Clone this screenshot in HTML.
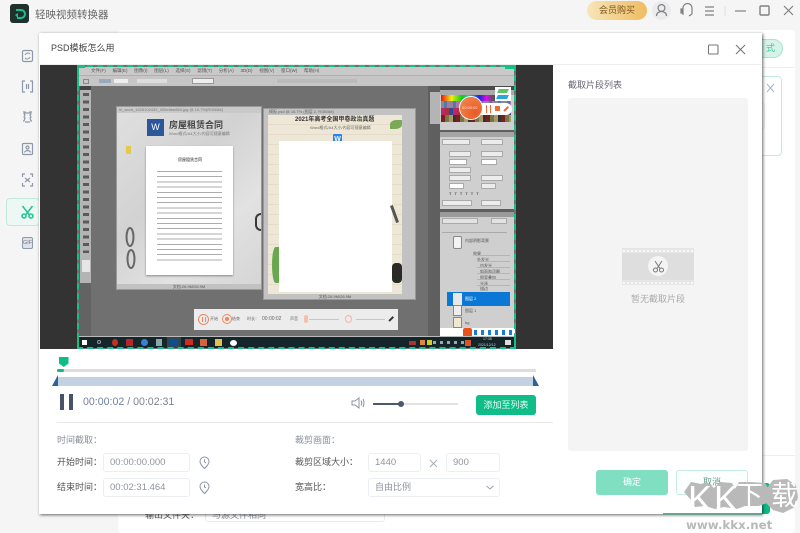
<!DOCTYPE html>
<html lang="zh"><head><meta charset="utf-8"><title>轻映视频转换器</title>
<style>
*{box-sizing:border-box}
html,body{margin:0;padding:0;width:800px;height:533px;overflow:hidden;background:#f5f5f5;font-family:"Liberation Sans","Noto Sans CJK SC",sans-serif;color:#333}
.a{position:absolute}
.t{position:absolute;white-space:nowrap;line-height:1}
.inp{position:absolute;background:#fff;border:1px solid #ebeef3;border-radius:3px;font-size:9.5px;color:#8f949c;line-height:17px;padding-left:6px;height:19px}
.lb{position:absolute;font-size:9px;color:#555;white-space:nowrap;line-height:1}
.x{position:absolute;font-size:4px;color:#555;white-space:nowrap;line-height:1}
.f{position:absolute;background:#ececec;border:1px solid #aaa;height:6px}
.wm{position:absolute;color:#fff;line-height:1;white-space:nowrap}
</style></head><body>
<!-- Title bar -->
<div class="a" style="left:10px;top:4px;width:19px;height:19px;background:#20302c;border-radius:3px"></div>
<svg class="a" style="left:10px;top:4px" width="19" height="19"><path d="M6 6h5a4 4 0 0 1 0 8H7" fill="none" stroke="#17c08c" stroke-width="2"/><path d="M5 11l3-2v5z" fill="#17c08c"/></svg>
<div class="t" style="left:35px;top:9.500px;font-size:10.500px;color:#666">轻映视频转换器</div>
<div class="a" style="left:587px;top:1px;width:60px;height:19px;border-radius:10px;background:linear-gradient(90deg,#f8e5b8,#efbc62);font-size:9px;color:#7a5520;text-align:center;line-height:19px">会员购买</div>
<div class="a" style="left:652px;top:1px;width:19px;height:19px;border-radius:50%;background:#ebebed"></div>
<svg class="a" style="left:652px;top:1px" width="148" height="20" fill="none" stroke="#808080" stroke-width="1.200">
<circle cx="9.500" cy="7" r="3.400"/><path d="M4.500 15c0-6 10-6 10 0"/>
<path d="M31 14V7a4.500 4.500 0 0 1 9 0v6M29 8h1v4h-1zM40 13l-3 2"/>
<path d="M53 6h9M53 10h9M53 14h9"/>
<path d="M73 5v10" stroke="#e3e3e3"/>
<path d="M83 10h11"/><rect x="108" y="5" width="9" height="9" rx="1" stroke-width="1.400"/>
<path d="M132 5l9 9M141 5l-9 9"/></svg>
<!-- Sidebar -->
<svg class="a" style="left:20px;top:48px" width="16" height="205" fill="none" stroke="#8f98a8" stroke-width="1.200">
<rect x="2.500" y="2.500" width="10" height="11" rx="1.500"/><path d="M5 7a3 3 0 0 1 5-1M10 9a3 3 0 0 1-5 1" stroke-width="1"/>
<path d="M5 33h-2.500v11H5M10 33h2.500v11H10M6.500 36v5M8.500 36v5"/>
<path d="M3 64h2l-1 2 1 1-1 2 1 1-1 3h-1M12 64h-2l1 2-1 1 1 2-1 1 1 3h1M5 65h5M5 74h5"/>
<rect x="2.500" y="95.500" width="10" height="11" rx="1"/><circle cx="7.500" cy="99.500" r="1.500"/><path d="M4.500 104.500c0-2.500 6-2.500 6 0"/>
<path d="M5 126h-2.500v3M10 126h2.500v3M5 138h-2.500v-3M10 138h2.500v-3M5 130l2.500 2 2.500-2M5 134l2.500-2 2.500 2"/>
</svg>
<div class="a" style="left:6px;top:198px;width:34px;height:28px;border:1px solid #bfe9da;border-radius:4px;background:#edf8f4"></div>
<svg class="a" style="left:21px;top:205px" width="13" height="14" fill="none" stroke="#27c796" stroke-width="1.600"><circle cx="3" cy="11" r="2"/><circle cx="10" cy="11" r="2"/><path d="M1.500 1l6.500 8.500M11.500 1L5 9.500"/></svg>
<div class="a" style="left:22px;top:237px;width:11px;height:12px;background:#dfe2e8;border:1px solid #8f98a8;border-radius:2px;font-size:5.500px;line-height:10px;text-align:center;color:#778">GIF</div>
<!-- Main backdrop -->
<div class="a" style="left:118px;top:30px;width:677px;height:503px;background:#fff;border-radius:4px"></div>
<div class="a" style="left:740px;top:67px;width:55px;height:1px;background:#eee"></div>
<div class="a" style="left:740px;top:39px;width:43px;height:19px;border-radius:10px;background:#d6f3e9;border:1px solid #a8e5d0;color:#3cc79a;font-size:9px;line-height:17px;text-align:right;padding-right:7px">式</div>
<div class="a" style="left:740px;top:76px;width:42px;height:80px;border:1.500px solid #c3ebdd;border-radius:4px"></div>
<div class="a" style="left:740px;top:103px;width:25px;height:26px;border:1px solid #eee;border-radius:3px"></div>
<svg class="a" style="left:766px;top:83px" width="9" height="10" fill="none" stroke="#a9b5c4"><path d="M1 1l7 8M8 1l-7 8"/></svg>
<div class="a" style="left:740px;top:455px;width:55px;height:1px;background:#eee"></div>
<div class="a" style="left:740px;top:483px;width:30px;height:31px;background:#0cb985;border-radius:3px"></div>
<div class="t" style="left:145px;top:510.500px;font-size:9px;color:#555">输出文件夹：</div>
<div class="a" style="left:205px;top:500px;width:180px;height:22px;background:#fff;border:1px solid #e8ecf2;border-radius:3px;font-size:9px;color:#8a8f98;line-height:28px;padding-left:6px">与源文件相同</div>
<!-- Modal -->
<div class="a" style="left:39px;top:33px;width:723px;height:481px;background:#fff;box-shadow:1px 1px 3px rgba(0,0,0,.6)"></div>
<div class="a" style="left:663px;top:513px;width:99px;height:1.500px;background:#6aa392"></div>
<div class="t" style="left:51px;top:44px;font-size:9px;color:#444">PSD模板怎么用</div>
<div class="a" style="left:40px;top:64px;width:721px;height:1px;background:#eee"></div>
<svg class="a" style="left:700px;top:41px" width="50" height="18" fill="none" stroke="#777" stroke-width="1.100"><rect x="8.500" y="4" width="9.500" height="9" rx="1"/><path d="M36 4l9 9M45 4l-9 9"/></svg>
<!-- Video -->
<div class="a" style="left:40px;top:65px;width:513px;height:284px;background:#333"></div>
<div class="a" style="left:77px;top:65px;width:439px;height:284px;background:#707070;overflow:hidden">
 <div class="a" style="left:2px;top:2px;width:435px;height:8px;background:#c9c9c9;font-size:4.500px;color:#555;line-height:8px;padding-left:12px;word-spacing:5.500px;white-space:nowrap">文件(F) 编辑(E) 图像(I) 图层(L) 选择(S) 滤镜(T) 分析(A) 3D(D) 视图(V) 窗口(W) 帮助(H)</div>
 <div class="a" style="left:2px;top:10px;width:435px;height:11px;background:#c6c6c6;border-top:1px solid #b0b0b0"></div>
 <div class="a" style="left:6px;top:14px;width:6px;height:5px;border:1px solid #888"></div>
 <div class="a" style="left:22px;top:14px;width:12px;height:4px;background:#9ab"></div>
 <div class="a" style="left:37px;top:14px;width:14px;height:4px;background:#eee"></div>
 <div class="a" style="left:60px;top:14px;width:30px;height:4px;background:#ddd"></div>
 <div class="a" style="left:115px;top:13px;width:22px;height:6px;background:#eee;border:1px solid #999"></div>
 <div class="a" style="left:200px;top:14px;width:80px;height:4px;background:#bbb"></div>
 <div class="a" style="left:2px;top:21px;width:12px;height:250px;background:#636363"></div>
 <div class="a" style="left:3px;top:21px;width:11px;height:4px;background:#444"></div>
 <div class="a" style="left:3px;top:25px;width:11px;height:193px;background:#b4b4b4"></div>
 <div class="a" style="left:6px;top:28px;width:6px;height:160px;background:repeating-linear-gradient(180deg,#5a5a5a 0 3px,transparent 3px 7.500px)"></div>
 <div class="a" style="left:5px;top:195px;width:8px;height:12px;background:#e6e6e6"></div>
 <!-- window 1 -->
 <div class="a" style="left:39px;top:41px;width:146px;height:184px;background:#c9c9c9;border:1px solid #999"></div>
 <div class="a" style="left:40px;top:48px;width:144px;height:171px;background:linear-gradient(135deg,#dfdfdf,#d2d2d2 40%,#e2e2e2 70%,#d5d5d5)"></div>
 <div class="a" style="left:42px;top:42px;font-size:4px;color:#777;white-space:nowrap">hl_word_1625102432_005e6be864.jpg @ 16.7%(RGB/8#)</div>
 <div class="a" style="left:70px;top:54px;width:17px;height:17px;background:#2b579a;color:#fff;font-size:9px;line-height:17px;text-align:center">W</div>
 <div class="t" style="left:92px;top:56px;font-size:9px;font-weight:bold;color:#444">房屋租赁合同</div>
 <div class="t" style="left:92px;top:67px;font-size:4px;color:#777">Word格式/A4大小/内容可随意编辑</div>
 <div class="a" style="left:69px;top:81px;width:87px;height:129px;background:#fff;box-shadow:0 1px 2px #888"></div>
 <div class="t" style="left:101px;top:93px;font-size:4px;font-weight:bold;color:#666">房屋租赁合同</div>
 <div class="a" style="left:80px;top:106px;width:65px;height:92px;background:repeating-linear-gradient(180deg,#888 0 1px,#fff 1px 5.200px);opacity:.7"></div>
 <div class="a" style="left:49px;top:81px;width:5px;height:8px;background:#e2c94f"></div>
 <svg class="a" style="left:46px;top:160px" width="16" height="48" fill="none" stroke="#666" stroke-width="2"><ellipse cx="7" cy="12" rx="3.500" ry="9"/><ellipse cx="8" cy="34" rx="3.500" ry="9"/></svg>
 <div class="a" style="left:178px;top:148px;width:6px;height:18px;border:2.500px solid #3a3a32;border-right:none;border-radius:6px 0 0 6px"></div>
 <div class="a" style="left:40px;top:219px;width:144px;height:5px;background:#c2c2c2;font-size:4px;text-align:center;color:#555;line-height:5px">文档:26.9M/26.9M</div>
 <!-- window 2 -->
 <div class="a" style="left:186px;top:43px;width:153px;height:192px;background:#c2c2c2;border:1px solid #999"></div>
 <div class="a" style="left:187px;top:44px;font-size:4px;color:#666;white-space:nowrap;padding-left:5px">模板.psd @ 16.7% (图层 2, RGB/8#)</div>
 <div class="a" style="left:191px;top:50px;width:134px;height:179px;background:#ebe4d3;background-image:repeating-linear-gradient(180deg,#eee7d7 0 9px,#e5dcc8 9px 10px)"></div>
 <div class="t" style="left:218px;top:52px;font-size:6px;font-weight:bold;color:#333">2021年高考全国甲卷政治真题</div>
 <div class="t" style="left:233px;top:61px;font-size:4px;color:#666">Word格式/A4大小/内容可随意编辑</div>
 <div class="a" style="left:256px;top:69px;width:9px;height:11px;background:#2b83ea;border-radius:1px;color:#fff;font-size:7px;line-height:11px;text-align:center;font-weight:bold">W</div>
 <div class="a" style="left:202px;top:76px;width:113px;height:151px;background:#fff"></div>
 <div class="a" style="left:195px;top:182px;width:7px;height:36px;background:#6aa84f;border-radius:60% 0 0 60%"></div>
 <div class="a" style="left:315px;top:198px;width:10px;height:20px;background:#2a2a26;border-radius:4px"></div>
 <div class="a" style="left:313px;top:55px;width:12px;height:9px;background:#7ba957;border-radius:50% 0 50% 0"></div>
 <div class="a" style="left:316px;top:140px;width:3px;height:18px;background:#555;transform:rotate(-20deg)"></div>
 <div class="a" style="left:191px;top:229px;width:134px;height:5px;background:#c2c2c2;font-size:4px;text-align:center;color:#555;line-height:5px">文档:26.9M/26.9M</div>
 <!-- Right panels -->
 <div class="a" style="left:351px;top:21px;width:12px;height:251px;background:#5f5f5f"></div>
 <div class="a" style="left:353px;top:27px;width:10px;height:32px;background:#b4b4b4"></div>
 <div class="a" style="left:363px;top:21px;width:74px;height:251px;background:#cfcfcf"></div>
 <div class="a" style="left:363px;top:21px;width:74px;height:4px;background:#4a4a4a"></div>
 <div class="a" style="left:363px;top:25px;width:74px;height:5px;background:#aaa"></div>
 <div class="a" style="left:364px;top:30px;width:70px;height:6px;background:linear-gradient(90deg,#e11,#ee1 15%,#1c1 30%,#1cc 40%,#22d 55%,#d1d 65%,#555 75%,#222)"></div>
 <div class="a" style="left:364px;top:36px;width:70px;height:7px;background:repeating-linear-gradient(90deg,#889 0 3px,#57a 3px 6px,#a7a 6px 9px)"></div>
 <div class="a" style="left:364px;top:43px;width:70px;height:7px;background:repeating-linear-gradient(90deg,#c2266a 0 4px,#a33 4px 8px,#2b4a9a 8px 12px)"></div>
 <div class="a" style="left:364px;top:50px;width:70px;height:7px;background:repeating-linear-gradient(90deg,#7a1f1f 0 4px,#774 4px 8px,#a96 8px 12px,#333 12px 15px)"></div>
 <div class="a" style="left:363px;top:65px;width:74px;height:2px;background:#5f5f5f"></div>
 <div class="a" style="left:363px;top:67px;width:74px;height:5px;background:#a5a5a5"></div>
 <div class="f" style="left:365px;top:74px;width:28px"></div><div class="f" style="left:404px;top:74px;width:22px"></div>
 <div class="f" style="left:372px;top:86px;width:22px"></div><div class="f" style="left:404px;top:86px;width:22px"></div>
 <div class="f" style="left:372px;top:94px;width:18px;background:#fff"></div><div class="f" style="left:404px;top:94px;width:16px;background:#fff"></div>
 <div class="f" style="left:372px;top:102px;width:22px"></div>
 <div class="f" style="left:372px;top:110px;width:22px"></div><div class="f" style="left:404px;top:110px;width:22px"></div>
 <div class="f" style="left:372px;top:118px;width:15px;background:#fff"></div><div class="f" style="left:404px;top:118px;width:15px"></div>
 <div class="x" style="left:372px;top:127px;letter-spacing:3px;font-weight:bold">TTTTTT</div>
 <div class="f" style="left:365px;top:135px;width:30px"></div><div class="f" style="left:404px;top:135px;width:20px"></div>
 <div class="a" style="left:363px;top:144px;width:74px;height:3px;background:#5f5f5f"></div>
 <div class="a" style="left:363px;top:147px;width:74px;height:5px;background:#9a9a9a"></div>
 <div class="f" style="left:365px;top:153px;width:36px;background:#e2e2e2"></div>
 <div class="f" style="left:414px;top:153px;width:16px;background:#e2e2e2"></div>
 <div class="a" style="left:365px;top:161px;width:65px;height:7px;border-bottom:1px solid #aaa"></div>
 <div class="a" style="left:376px;top:171px;width:9px;height:13px;background:#f2f2f2;border:1px solid #888;border-radius:2px"></div>
 <div class="x" style="left:388px;top:174px">内部阴影背景</div>
 <div class="x" style="left:396px;top:187px">效果</div>
 <div class="x" style="left:400px;top:193px">外发光</div>
 <div class="x" style="left:403px;top:199px">内发光</div>
 <div class="x" style="left:403px;top:205px">斜面和浮雕</div>
 <div class="x" style="left:403px;top:211px">图案叠加</div>
 <div class="x" style="left:403px;top:217px">光泽</div>
 <div class="x" style="left:403px;top:222px">描边</div>
 <div class="a" style="left:400px;top:190px;width:33px;height:36px;background:repeating-linear-gradient(180deg,#b5b5b5 0 1px,transparent 1px 6px)"></div>
 <div class="a" style="left:370px;top:227px;width:63px;height:14px;background:#0a78d4"></div>
 <div class="a" style="left:376px;top:228px;width:9px;height:12px;background:#e8e8e8"></div>
 <div class="x" style="left:388px;top:232px;color:#fff">图层 2</div>
 <div class="a" style="left:376px;top:240px;width:9px;height:11px;background:#eee;border:1px solid #888"></div>
 <div class="x" style="left:388px;top:244px">图层 1</div>
 <div class="a" style="left:376px;top:252px;width:9px;height:11px;background:#efe8d3;border:1px solid #888"></div>
 <div class="x" style="left:388px;top:256px">bg</div>
 <div class="a" style="left:363px;top:263px;width:75px;height:9px;background:#fff"></div>
 <div class="a" style="left:386px;top:263px;width:9px;height:9px;background:#e8501c;border-radius:2px"></div>
 <div class="a" style="left:397px;top:265px;width:40px;height:5px;background:repeating-linear-gradient(90deg,#1b7bcf 0 3px,#fff 3px 7px)"></div>
 <!-- Floating recorder -->
 <div class="a" style="left:394px;top:38px;width:41px;height:12px;background:#fff;border-radius:6px"></div>
 <div class="a" style="left:383px;top:32px;width:22px;height:22px;border-radius:50%;background:radial-gradient(circle at 70% 70%,#e85b25,#f58a4e);box-shadow:0 0 0 1px #fff"></div>
 <div class="a" style="left:385px;top:41px;font-size:4px;color:#fde;line-height:1;white-space:nowrap">00:00:02</div>
 <div class="a" style="left:409px;top:40px;width:5px;height:8px;border-left:1.500px solid #ef6a32;border-right:1.500px solid #ef6a32"></div>
 <div class="a" style="left:418px;top:41px;width:5px;height:5px;background:#ef6a32"></div>
 <div class="a" style="left:426px;top:43px;width:6px;height:1.500px;background:#ef6a32;transform:rotate(-45deg)"></div>
 <div class="a" style="left:418px;top:22px;width:16px;height:14px;background:#fff"></div>
 <div class="a" style="left:421px;top:24px;width:10px;height:4px;background:#5bc46a;transform:skewX(-25deg)"></div>
 <div class="a" style="left:420px;top:30px;width:11px;height:4px;background:#27a6e0;transform:skewX(-25deg)"></div>
 <!-- bottom recorder bar -->
 <div class="a" style="left:117px;top:244px;width:204px;height:21px;background:#ececec"></div>
 <div class="a" style="left:121px;top:249px;width:11px;height:11px;border-radius:50%;border:1.500px solid #ef8a60"></div>
 <div class="a" style="left:124.500px;top:252px;width:4px;height:5px;border-left:1.200px solid #ef8a60;border-right:1.200px solid #ef8a60"></div>
 <div class="a" style="left:145px;top:249px;width:10px;height:10px;border-radius:50%;border:1px solid #ef8a60;background:radial-gradient(#ef8a60 0 35%,transparent 40%)"></div>
 <div class="t" style="left:133px;top:252px;font-size:4px;color:#666">开始</div>
 <div class="t" style="left:155px;top:252px;font-size:4px;color:#666">结束</div>
 <div class="t" style="left:170px;top:252px;font-size:4px;color:#666">时长：</div>
 <div class="t" style="left:185px;top:252px;font-size:5px;color:#666">00:00:02</div>
 <div class="t" style="left:213px;top:252px;font-size:4px;color:#666">声音</div>
 <div class="a" style="left:227px;top:250px;width:4px;height:8px;background:#f5c0a8;border-radius:2px"></div>
 <div class="a" style="left:232px;top:254px;width:30px;height:1px;background:#f5b59e"></div>
 <div class="a" style="left:268px;top:250px;width:7px;height:8px;border:1px solid #f5b59e;border-radius:50%"></div>
 <div class="a" style="left:279px;top:254px;width:29px;height:1px;background:#f5b59e"></div>
 <div class="a" style="left:311px;top:253px;width:6px;height:1.500px;background:#333;transform:rotate(-45deg)"></div>
 <!-- Taskbar -->
 <div class="a" style="left:0;top:271px;width:439px;height:1px;background:#bbb"></div>
 <div class="a" style="left:2px;top:272px;width:435px;height:11px;background:#15262b"></div>
 <div class="a" style="left:5px;top:275px;width:5px;height:5px;background:#fff"></div>
 <div class="a" style="left:20px;top:275px;width:4px;height:4px;border:1px solid #999;border-radius:50%"></div>
 <div class="a" style="left:35px;top:274px;width:6px;height:7px;background:#c9301f;border-radius:50%"></div>
 <div class="a" style="left:49px;top:274px;width:7px;height:7px;background:#b8262b"></div>
 <div class="a" style="left:64px;top:274px;width:7px;height:7px;background:#3a82d0;border-radius:50%"></div>
 <div class="a" style="left:79px;top:274px;width:6px;height:7px;background:#8aa"></div>
 <div class="a" style="left:90px;top:272px;width:14px;height:11px;background:#33454c"></div>
 <div class="a" style="left:93px;top:274px;width:8px;height:7px;background:#0a4f96"></div>
 <div class="a" style="left:108px;top:274px;width:8px;height:6px;background:#d02b20"></div>
 <div class="a" style="left:123px;top:274px;width:7px;height:7px;background:#d8623c"></div>
 <div class="a" style="left:138px;top:274px;width:7px;height:7px;background:#e3c14a"></div>
 <div class="a" style="left:153px;top:275px;width:7px;height:6px;background:#fff;border-radius:50%"></div>
 <div class="a" style="left:332px;top:276px;width:7px;height:4px;background:#a33"></div>
 <div class="a" style="left:343px;top:275px;width:5px;height:5px;background:#d84"></div>
 <div class="a" style="left:350px;top:275px;width:5px;height:5px;background:#cc3"></div>
 <div class="a" style="left:356px;top:276px;width:40px;height:3px;background:repeating-linear-gradient(90deg,#9aa 0 3px,#15262b 3px 7px)"></div>
 <div class="a" style="left:388px;top:275px;width:6px;height:6px;background:#d8552a"></div>
 <div class="t" style="left:406px;top:273px;font-size:3.500px;color:#ccc">17:38</div>
 <div class="t" style="left:401px;top:279px;font-size:3.500px;color:#ccc">2021/12/12</div>
 <div class="a" style="left:428px;top:275px;width:6px;height:5px;background:#ddd"></div>
 <!-- Green frame -->
 <div class="a" style="left:0;top:0;width:439px;height:284px;border:2px dashed #14c08a;pointer-events:none"></div>
 <div class="a" style="left:0;top:0;width:2px;height:25px;background:#14c08a"></div>
 <div class="a" style="left:437px;top:0;width:2px;height:6px;background:#14c08a"></div>
 <div class="a" style="left:0;top:272px;width:2px;height:12px;background:#14c08a"></div>
 <div class="a" style="left:437px;top:272px;width:2px;height:12px;background:#14c08a"></div>
 <div class="a" style="left:0;top:0;width:8px;height:3px;background:#14c08a"></div>
 <div class="a" style="left:428px;top:0;width:11px;height:4px;background:#14c08a"></div>
</div>
<!-- Timeline -->
<div class="a" style="left:59px;top:357px;width:9.500px;height:10px;background:#0dbd86;clip-path:polygon(0 0,100% 0,100% 65%,50% 100%,0 65%)"></div>
<div class="a" style="left:57px;top:369px;width:479px;height:3px;background:#dedede"></div>
<div class="a" style="left:57px;top:369px;width:7px;height:3px;background:#0dbd86;border-radius:2px"></div>
<div class="a" style="left:58px;top:377px;width:475px;height:9px;background:#c2d2e3"></div>
<div class="a" style="left:52px;top:375px;width:6px;height:11px;background:#2a6398;clip-path:polygon(100% 0,100% 100%,0 100%)"></div>
<div class="a" style="left:533px;top:375px;width:6px;height:11px;background:#2a6398;clip-path:polygon(0 0,100% 100%,0 100%)"></div>
<div class="a" style="left:60px;top:394px;width:4px;height:16px;background:#475369"></div>
<div class="a" style="left:69px;top:394px;width:4px;height:16px;background:#475369"></div>
<div class="t" style="left:83px;top:397px;font-size:10.600px;color:#6f84a3">00:00:02 <span style="color:#7b8494">/ 00:02:31</span></div>
<svg class="a" style="left:351px;top:396px" width="14" height="14" fill="none" stroke="#8a93a3" stroke-width="1"><path d="M1 5h3l4-3v10l-4-3H1z"/><path d="M10 4.500q1.500 2.500 0 5M12 3q2 4 0 8"/></svg>
<div class="a" style="left:373px;top:403px;width:85px;height:2px;background:#e2e2e2"></div>
<div class="a" style="left:373px;top:403px;width:28px;height:2px;background:#4b5870"></div>
<div class="a" style="left:398px;top:401px;width:6px;height:6px;border-radius:50%;background:#4b5870"></div>
<div class="a" style="left:476px;top:395px;width:60px;height:20px;background:#10bd88;border-radius:3px;color:#e8fbf4;font-size:9px;text-align:center;line-height:20px">添加至列表</div>
<div class="a" style="left:57px;top:422px;width:496px;height:1px;background:#eaeaea"></div>
<!-- Form -->
<div class="lb" style="left:57px;top:435.500px;color:#8a8f98">时间截取：</div>
<div class="lb" style="left:57px;top:457.500px">开始时间：</div>
<div class="lb" style="left:57px;top:482.500px">结束时间：</div>
<div class="inp" style="left:103px;top:453px;width:87px">00:00:00.000</div>
<div class="inp" style="left:103px;top:478px;width:87px">00:02:31.464</div>
<svg class="a" style="left:199px;top:456px" width="12" height="40" fill="none" stroke="#8a93a3" stroke-width="1"><path d="M5.500 1a4.500 4.500 0 0 1 4.500 4.500c0 3-4.500 7-4.500 7S1 8.500 1 5.500A4.500 4.500 0 0 1 5.500 1zM5.500 3.500v2.500l1.500 1"/><path d="M5.500 26a4.500 4.500 0 0 1 4.500 4.500c0 3-4.500 7-4.500 7S1 33.500 1 30.500A4.500 4.500 0 0 1 5.500 26zM5.500 28.500v2.500l1.500 1"/></svg>
<div class="lb" style="left:295px;top:435.500px;color:#8a8f98">裁剪画面：</div>
<div class="lb" style="left:295px;top:457.500px">裁剪区域大小：</div>
<div class="lb" style="left:295px;top:482.500px">宽高比：</div>
<div class="inp" style="left:368px;top:453px;width:53px">1440</div>
<svg class="a" style="left:429px;top:459px" width="9" height="9" fill="none" stroke="#a9b1bd"><path d="M1 1l7 7M8 1L1 8"/></svg>
<div class="inp" style="left:446px;top:453px;width:54px">900</div>
<div class="inp" style="left:368px;top:478px;width:132px;font-size:9px">自由比例</div>
<svg class="a" style="left:485px;top:484px" width="10" height="8" fill="none" stroke="#9aa2ae"><path d="M1.500 2l3.500 3 3.500-3"/></svg>
<!-- Right panel -->
<div class="t" style="left:568px;top:80.500px;font-size:9px;color:#667">截取片段列表</div>
<div class="a" style="left:568px;top:98px;width:180px;height:353px;background:#f4f4f4;border-radius:3px"></div>
<div class="a" style="left:622px;top:248px;width:72px;height:37px;background:#dedede"></div>
<div class="a" style="left:622px;top:248px;width:72px;height:5px;background:#e6e6e6"></div>
<div class="a" style="left:622px;top:280px;width:72px;height:5px;background:#e6e6e6"></div>
<div class="a" style="left:623px;top:249.500px;width:70px;height:2px;background:repeating-linear-gradient(90deg,#f8f8f8 0 2px,transparent 2px 4px)"></div>
<div class="a" style="left:623px;top:281.500px;width:70px;height:2px;background:repeating-linear-gradient(90deg,#f8f8f8 0 2px,transparent 2px 4px)"></div>
<div class="a" style="left:648px;top:256px;width:20px;height:20px;border-radius:50%;background:#f4f4f4"></div>
<svg class="a" style="left:652px;top:260px" width="13" height="13" fill="none" stroke="#777" stroke-width="1"><circle cx="3.500" cy="10" r="2"/><circle cx="9.500" cy="10" r="2"/><path d="M3 1l5 7.500M10 1L5 8.500"/></svg>
<div class="t" style="left:631px;top:294.500px;font-size:9px;color:#aaa">暂无截取片段</div>
<div class="a" style="left:596px;top:470px;width:72px;height:25px;background:#80dfc1;border-radius:3px;color:#fff;font-size:9px;text-align:center;line-height:25px">确定</div>
<div class="a" style="left:676px;top:470px;width:72px;height:25px;background:#fbfffd;border:1px solid #c5eede;border-radius:3px;color:#6b9c8c;font-size:9px;text-align:center;line-height:23px">取消</div>
<!-- Watermark -->
<svg class="a" style="left:683px;top:478px" width="116" height="38" fill="#b9b9b9"><path d="M1 14L8 4l10 2 6-2 7 6 6-6 12 1 3 6 4-7 12 0 14 1 5 8-3 12-8 3-14 0-8 3-13-2-9 2-10-3-10 1-4-7z"/><path d="M84 10l6-8 14-1 9 6 2 12-3 10-12 6-10-3-7-7z"/></svg>
<div class="wm" style="left:688px;top:481px;font-size:36px">K</div>
<div class="wm" style="left:714px;top:481px;font-size:36px">K</div>
<div class="wm" style="left:736px;top:483px;font-size:27px">下</div>
<div class="wm" style="left:771px;top:483px;font-size:27px">载</div>
<div class="t" style="left:686px;top:520px;font-size:11.800px;font-weight:bold;color:#b8b8b8;font-family:'DejaVu Sans',sans-serif">www.kkx.net</div>
</body></html>
